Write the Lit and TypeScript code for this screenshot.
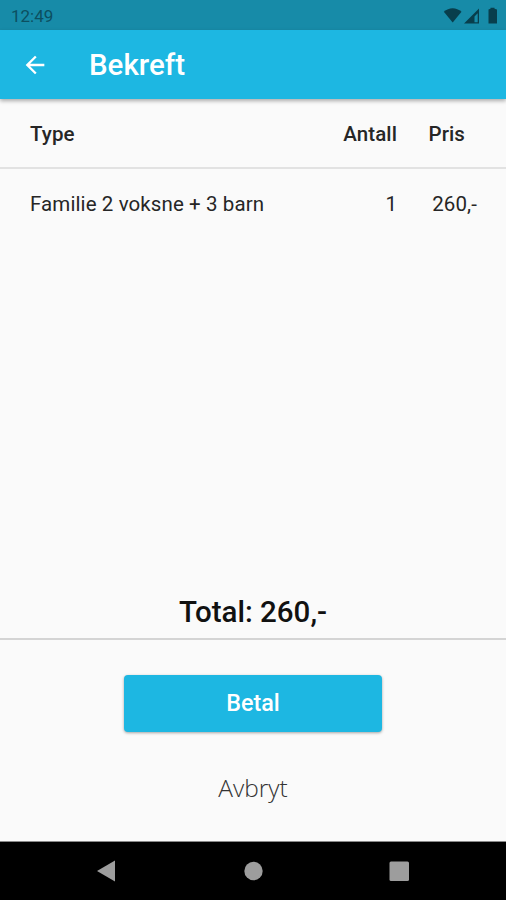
import { LitElement, html, css } from "lit";
import { customElement, state } from "lit/decorators.js";

interface Ticket {
  name: string;
  count: number;
  price: number;
}

@customElement("app-root")
export class AppRoot extends LitElement {
  @state() private tickets: Ticket[] = [
    { name: "Familie 2 voksne + 3 barn", count: 1, price: 260 },
  ];

  static styles = css`
    :host {
      display: flex;
      flex-direction: column;
      height: 900px;
      overflow: hidden;
      background: #fafafa;
      color: #262626;
      font-family: Roboto, sans-serif;
    }
    svg { display: block; }
    .status {
      flex: none;
      display: flex;
      align-items: center;
      justify-content: space-between;
      box-sizing: border-box;
      height: 30px;
      padding: 1px 7px 0 11px;
      background: #178ba8;
      color: #0c4f60;
      font-size: 17px;
      line-height: 28px;
    }
    .bar {
      flex: none;
      display: flex;
      align-items: center;
      gap: 40px;
      box-sizing: border-box;
      height: 69px;
      padding-left: 21px;
      background: #1db7e2;
      color: #fff;
      box-shadow: 0 2px 4px rgba(0, 0, 0, 0.32);
    }
    .title {
      margin: 0;
      padding-top: 1px;
      font-size: 29.5px;
      font-weight: 500;
      line-height: 68px;
    }
    .row {
      flex: none;
      display: grid;
      grid-template-columns: 1fr 80px 80px;
      align-items: center;
      box-sizing: border-box;
      height: 70px;
      padding: 0 29px 0 30px;
      font-size: 20.5px;
      letter-spacing: 0.1px;
    }
    .head {
      padding-top: 1px;
      border-bottom: 2px solid #e2e2e2;
      font-weight: 500;
    }
    .num { text-align: right; }
    .head .price { padding-right: 12px; }
    .space { flex: 1; }
    .total {
      flex: none;
      box-sizing: border-box;
      height: 55px;
      border-bottom: 2px solid #d4d4d4;
      font-size: 29.5px;
      font-weight: 500;
      line-height: 55px;
      text-align: center;
      color: #111;
    }
    .actions {
      flex: none;
      display: flex;
      flex-direction: column;
      align-items: center;
      box-sizing: border-box;
      height: 202px;
      padding-top: 35px;
      gap: 31px;
      border-bottom: 1px solid #8a8a8a;
    }
    button {
      border: 0;
      padding: 0;
      background: none;
    }
    .pay {
      width: 258px;
      height: 57px;
      border-radius: 4px;
      background: #1db7e2;
      box-shadow: 0 1px 3px rgba(0, 0, 0, 0.35);
      color: #fff;
      font: 500 23.300px/57px Roboto, sans-serif;
    }
    .cancel {
      height: 50px;
      color: #333;
      font: 340 24.500px/50px "Open Sans", "Noto Sans", sans-serif;
    }
    .nav {
      flex: none;
      height: 58px;
      background: #000;
    }
  `;

  render() {
    const total = this.tickets.reduce((sum, t) => sum + t.count * t.price, 0);
    return html`
      <div class="status">
        <span>12:49</span>
        <svg width="56" height="20" viewBox="0 0 56 20" fill="#083e4c">
          <path d="M.8 5.800C6 1 13.300 1 18.500 5.800L9.700 16.500Z" />
          <path d="M36 2.500V17.500H21ZM34.700 7.200L31.500 10.500V16.200H34.700Z" fill-rule="evenodd" />
          <path d="M45.500 3.500L47.500 2.800V1.800H51.500V2.800L54 3.500V17.500H45.500Z" />
        </svg>
      </div>
      <header class="bar">
        <svg width="28" height="28" viewBox="0 0 24 24" fill="#fff">
          <path d="M20 11H7.830l5.590-5.590L12 4l-8 8 8 8 1.410-1.410L7.830 13H20v-2z" />
        </svg>
        <h1 class="title">Bekreft</h1>
      </header>
      <div class="row head">
        <span>Type</span>
        <span class="num">Antall</span>
        <span class="num price">Pris</span>
      </div>
      ${this.tickets.map(
        (t) => html`<div class="row">
          <span>${t.name}</span>
          <span class="num">${t.count}</span>
          <span class="num">${t.price},-</span>
        </div>`
      )}
      <div class="space"></div>
      <div class="total">Total: ${total},-</div>
      <div class="actions">
        <button class="pay">Betal</button>
        <button class="cancel">Avbryt</button>
      </div>
      <svg class="nav" width="506" height="58" viewBox="0 0 506 58" fill="#9d9d9d">
        <path d="M97 29L115 18.500V39.500Z" />
        <circle cx="253.500" cy="29" r="9.200" />
        <rect x="389.500" y="19.500" width="19.500" height="19.500" rx="1.500" />
      </svg>
    `;
  }
}
